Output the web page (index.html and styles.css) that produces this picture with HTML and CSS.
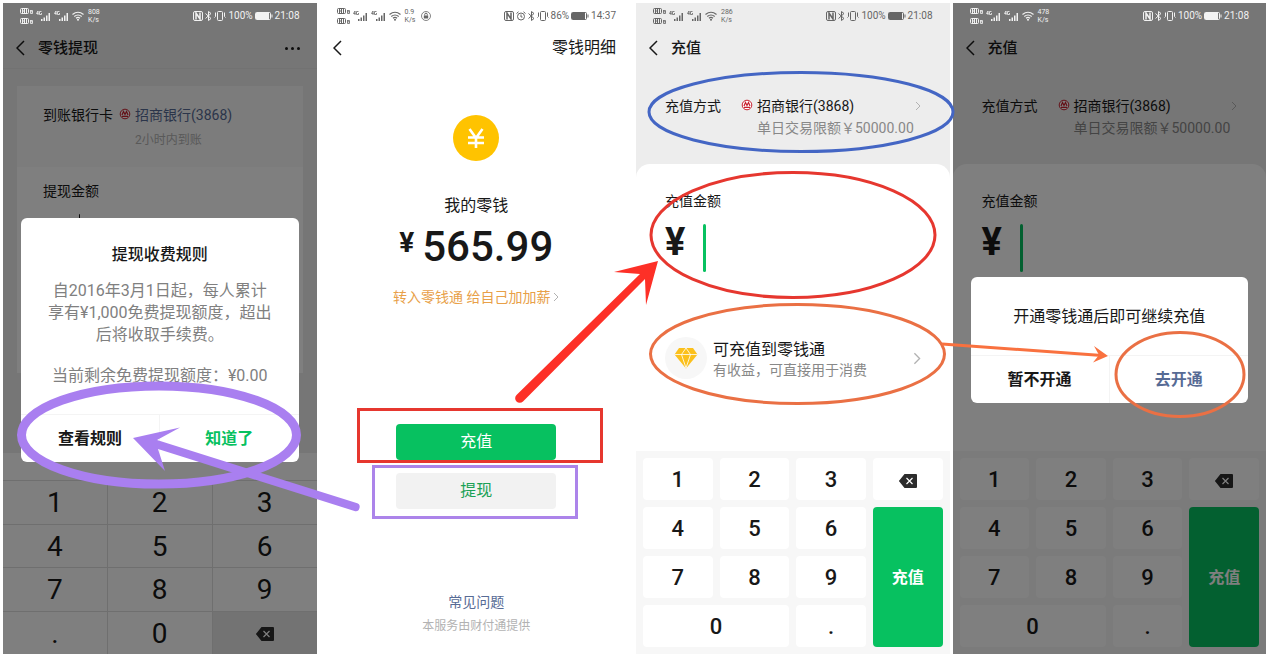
FILE: index.html
```html
<!DOCTYPE html>
<html lang="zh-CN">
<head>
  <meta charset="UTF-8" />
  <meta name="viewport" content="width=device-width, initial-scale=1.0"/>
  <title>零钱充值与提现</title>
  <link rel="stylesheet" href="styles.css">
</head>
<body>
  <!-- Shared icons -->
  <svg class="icon-defs" aria-hidden="true">
    <symbol id="hd" viewBox="0 0 14 17">
      <g fill="none" stroke="currentColor">
        <rect x="0.5" y="1.5" width="8" height="5" rx="1"/>
        <rect x="0.5" y="11.5" width="8" height="5" rx="1"/>
        <path d="M2.5 2v4M4.5 2v4M2.5 4h2M6.5 2v4M2.5 12v4M4.5 12v4M2.5 14h2M6.5 12v4"/>
        <path d="M10.5 3v3.500h2v-3h-2M10.500 4.800h2M10.500 13v3.500h2v-3h-2M10.500 14.800h2" stroke-width="0.8"/>
      </g>
    </symbol>
    <symbol id="signal" viewBox="0 0 16 12">
      <path d="M2 1L0.500 3.500h2M2 1v4M5.500 1.500h-2v3h2v-1.500" fill="none" stroke="currentColor" stroke-width="0.800"/>
      <path d="M5 9h1.500v2H5zM7.500 7.500H9V11H7.500zM10 5.500h1.500V11H10zM12.500 3H14v8h-1.500z" fill="currentColor"/>
    </symbol>
    <symbol id="wifi" viewBox="0 0 12 10">
      <g fill="none" stroke="currentColor" stroke-width="1.200">
        <path d="M0.500 3.500Q6-1 11.500 3.500M2.300 5.500Q6 2.500 9.700 5.500M4 7.300Q6 5.500 8 7.300"/>
      </g>
      <circle cx="6" cy="8.700" r="1" fill="currentColor"/>
    </symbol>
    <symbol id="nfc" viewBox="0 0 10 10">
      <rect x="0.500" y="0.500" width="9" height="9" rx="1.500" fill="none" stroke="currentColor"/>
      <path d="M3 8.500V2l4 6V1.500" fill="none" stroke="currentColor" stroke-width="1.500"/>
    </symbol>
    <symbol id="bluetooth" viewBox="0 0 7 10">
      <path d="M0.500 2.500l5.500 5L3.500 9.500v-9L6 2.500l-5.500 5" fill="none" stroke="currentColor"/>
    </symbol>
    <symbol id="vibrate" viewBox="0 0 12 10">
      <rect x="3.500" y="0.500" width="5" height="9" rx="1" fill="none" stroke="currentColor"/>
      <path d="M1.500 1.500v4l-1 1M10.500 1.500v4l1 1" fill="none" stroke="currentColor"/>
    </symbol>
    <symbol id="battery" viewBox="0 0 18 8">
      <rect x="0.500" y="0.500" width="15" height="7" rx="1" fill="none" stroke="currentColor"/>
      <path d="M1 1h13v6H1zM16.500 2.500h1v3h-1z" fill="currentColor"/>
    </symbol>
    <symbol id="alarm" viewBox="0 0 10 10">
      <circle cx="5" cy="5.500" r="3.500" fill="none" stroke="currentColor"/>
      <path d="M5 3.500v2.500h1.500M0.500 2.500L2.500 0.800M9.500 2.500L7.500 0.800" fill="none" stroke="currentColor"/>
    </symbol>
    <symbol id="lock" viewBox="0 0 10 10">
      <circle cx="5" cy="5" r="4.500" fill="none" stroke="currentColor" stroke-width="0.800"/>
      <path d="M2.800 4.500h4.400v3H2.800z" fill="currentColor"/>
      <path d="M3.700 4.500V3.500a1.300 1.300 0 0 1 2.600 0v1" fill="none" stroke="currentColor"/>
    </symbol>
    <symbol id="back" viewBox="0 0 9 16">
      <path d="M8 1L1 8l7 7" fill="none" stroke="currentColor" stroke-width="1.500"/>
    </symbol>
    <symbol id="next" viewBox="0 0 6 10">
      <path d="M1 1l4 4-4 4" fill="none" stroke="currentColor"/>
    </symbol>
    <symbol id="bank" viewBox="0 0 12 12">
      <circle cx="6" cy="6" r="4.800" fill="#fff" stroke="#c8202f"/>
      <path d="M3 7L4.500 3.500 6 6.500 7.500 3.500 9 7M3 8.300h6" fill="none" stroke="#c8202f" stroke-width="1.200"/>
    </symbol>
    <symbol id="delete" viewBox="0 0 18 14">
      <path d="M5.500 0H17a1 1 0 0 1 1 1v12a1 1 0 0 1-1 1H5.500L0.500 7.800a1 1 0 0 1 0-1.600z" fill="#2c2c2c"/>
      <path d="M7.500 4l6 6M13.500 4l-6 6" stroke="#fff" stroke-width="1.200"/>
    </symbol>
    <symbol id="diamond" viewBox="0 0 24 22">
      <path d="M5 1h14l4.500 6.500L12 21.500 0.500 7.500z" fill="#fbc01c"/>
      <path d="M0.500 7.500h23M7.500 7.500L12 21l4.500-13.500M7.500 7.500L12 1l4.500 6.500" fill="none" stroke="#fff" stroke-width="0.800"/>
    </symbol>
  </svg>

  <main class="board">
    <!-- Withdraw rules -->
    <section class="phone">
      <div class="status status-light">
        <svg class="i-hd"><use href="#hd"/></svg>
        <svg class="i-signal"><use href="#signal"/></svg>
        <svg class="i-signal"><use href="#signal"/></svg>
        <svg class="i-wifi"><use href="#wifi"/></svg>
        <span class="speed">808<br>K/s</span>
        <div class="status-right">
          <svg class="i-small"><use href="#nfc"/></svg>
          <svg class="i-bt"><use href="#bluetooth"/></svg>
          <svg class="i-vibrate"><use href="#vibrate"/></svg>
          <span>100%</span>
          <svg class="i-battery"><use href="#battery"/></svg>
          <time>21:08</time>
        </div>
      </div>
      <header class="nav nav-line">
        <button class="back" aria-label="返回"><svg><use href="#back"/></svg></button>
        <h2>零钱提现</h2>
        <button class="more" aria-label="更多"><i></i><i></i><i></i></button>
      </header>
      <div class="card">
        <div class="card-top">
          <div class="method">
            <span class="method-label">到账银行卡</span>
            <svg class="bank"><use href="#bank"/></svg>
            <div class="method-info">
              <a class="bank-link" href="#">招商银行(3868)</a>
              <p class="arrive">2小时内到账</p>
            </div>
          </div>
        </div>
        <div class="card-bottom">
          <label class="amount-label" for="withdraw">提现金额</label>
          <div class="amount-row">
            <span class="yen yen-small">¥</span>
            <span class="caret caret-dark"></span>
            <input id="withdraw" class="amount-input" type="text">
          </div>
        </div>
      </div>
      <div class="plain-pad">
        <div class="pad-bar"></div>
        <div class="plain-keys">
          <button>1</button><button>2</button><button>3</button>
          <button>4</button><button>5</button><button>6</button>
          <button>7</button><button>8</button><button>9</button>
          <button>.</button><button>0</button>
          <button class="plain-del" aria-label="删除"><svg class="i-del"><use href="#delete"/></svg></button>
        </div>
      </div>
      <div class="mask">
        <div class="dialog" role="dialog">
          <div class="rules">
            <h3>提现收费规则</h3>
            <p>自2016年3月1日起，每人累计<br>享有¥1,000免费提现额度，超出<br>后将收取手续费。</p>
            <p class="remain">当前剩余免费提现额度：¥0.00</p>
          </div>
          <div class="dialog-actions">
            <button>查看规则</button>
            <button class="green-text">知道了</button>
          </div>
        </div>
      </div>
    </section>

    <!-- Balance -->
    <section class="phone phone-white">
      <div class="status">
        <svg class="i-hd"><use href="#hd"/></svg>
        <svg class="i-signal"><use href="#signal"/></svg>
        <svg class="i-signal"><use href="#signal"/></svg>
        <svg class="i-wifi"><use href="#wifi"/></svg>
        <span class="speed">0.9<br>K/s</span>
        <svg class="i-small"><use href="#lock"/></svg>
        <div class="status-right">
          <svg class="i-small"><use href="#nfc"/></svg>
          <svg class="i-small"><use href="#alarm"/></svg>
          <svg class="i-bt"><use href="#bluetooth"/></svg>
          <svg class="i-vibrate"><use href="#vibrate"/></svg>
          <span>86%</span>
          <svg class="i-battery"><use href="#battery"/></svg>
          <time>14:37</time>
        </div>
      </div>
      <header class="nav">
        <button class="back" aria-label="返回"><svg><use href="#back"/></svg></button>
        <a class="nav-link" href="#">零钱明细</a>
      </header>
      <div class="wallet">
        <svg class="coin" viewBox="0 0 46 46" aria-hidden="true">
          <circle cx="23" cy="23" r="23" fill="#ffc300"/>
          <path d="M16.500 14l6.500 9 6.500-9M15 22.500h16M15 28h16M23 22v11" fill="none" stroke="#fff" stroke-width="2.600"/>
        </svg>
        <h3 class="wallet-title">我的零钱</h3>
        <p class="balance"><span class="balance-yen">¥</span>565.99</p>
        <a class="promo" href="#">转入零钱通 给自己加加薪<svg class="i-next"><use href="#next"/></svg></a>
        <div class="wallet-buttons">
          <button class="btn btn-green">充值</button>
          <button class="btn btn-grey">提现</button>
        </div>
        <a class="faq" href="#">常见问题</a>
        <p class="provider">本服务由财付通提供</p>
      </div>
    </section>

    <!-- Top up -->
    <section class="phone">
      <div class="status">
        <svg class="i-hd"><use href="#hd"/></svg>
        <svg class="i-signal"><use href="#signal"/></svg>
        <svg class="i-signal"><use href="#signal"/></svg>
        <svg class="i-wifi"><use href="#wifi"/></svg>
        <span class="speed">286<br>K/s</span>
        <div class="status-right">
          <svg class="i-small"><use href="#nfc"/></svg>
          <svg class="i-bt"><use href="#bluetooth"/></svg>
          <svg class="i-vibrate"><use href="#vibrate"/></svg>
          <span>100%</span>
          <svg class="i-battery"><use href="#battery"/></svg>
          <time>21:08</time>
        </div>
      </div>
      <header class="nav">
        <button class="back" aria-label="返回"><svg><use href="#back"/></svg></button>
        <h2>充值</h2>
      </header>
      <div class="method method-pay">
        <span class="method-label">充值方式</span>
        <svg class="bank"><use href="#bank"/></svg>
        <div class="method-info">
          <p class="bank-name">招商银行(3868)<svg class="i-next"><use href="#next"/></svg></p>
          <p class="limit">单日交易限额￥50000.00</p>
        </div>
      </div>
      <div class="sheet">
        <label class="amount-label" for="topup">充值金额</label>
        <div class="amount-row">
          <span class="yen">¥</span>
          <span class="caret"></span>
          <input id="topup" class="amount-input" type="text">
        </div>
        <a class="fund" href="#">
          <span class="fund-icon"><svg><use href="#diamond"/></svg></span>
          <span class="fund-text">
            <strong>可充值到零钱通</strong>
            <small>有收益，可直接用于消费</small>
          </span>
          <svg class="i-next-big"><use href="#next"/></svg>
        </a>
      </div>
      <div class="keypad">
        <button>1</button><button>2</button><button>3</button>
        <button aria-label="删除"><svg class="i-del"><use href="#delete"/></svg></button>
        <button>4</button><button>5</button><button>6</button>
        <button class="key-pay">充值</button>
        <button>7</button><button>8</button><button>9</button>
        <button class="key-zero">0</button><button>.</button>
      </div>
    </section>

    <!-- Top up, confirm dialog -->
    <section class="phone">
      <div class="status status-light">
        <svg class="i-hd"><use href="#hd"/></svg>
        <svg class="i-signal"><use href="#signal"/></svg>
        <svg class="i-signal"><use href="#signal"/></svg>
        <svg class="i-wifi"><use href="#wifi"/></svg>
        <span class="speed">478<br>K/s</span>
        <div class="status-right">
          <svg class="i-small"><use href="#nfc"/></svg>
          <svg class="i-bt"><use href="#bluetooth"/></svg>
          <svg class="i-vibrate"><use href="#vibrate"/></svg>
          <span>100%</span>
          <svg class="i-battery"><use href="#battery"/></svg>
          <time>21:08</time>
        </div>
      </div>
      <header class="nav">
        <button class="back" aria-label="返回"><svg><use href="#back"/></svg></button>
        <h2>充值</h2>
      </header>
      <div class="method method-pay">
        <span class="method-label">充值方式</span>
        <svg class="bank"><use href="#bank"/></svg>
        <div class="method-info">
          <p class="bank-name">招商银行(3868)<svg class="i-next"><use href="#next"/></svg></p>
          <p class="limit">单日交易限额￥50000.00</p>
        </div>
      </div>
      <div class="sheet">
        <label class="amount-label" for="topup2">充值金额</label>
        <div class="amount-row">
          <span class="yen">¥</span>
          <span class="caret"></span>
          <input id="topup2" class="amount-input" type="text">
        </div>
      </div>
      <div class="keypad">
        <button>1</button><button>2</button><button>3</button>
        <button aria-label="删除"><svg class="i-del"><use href="#delete"/></svg></button>
        <button>4</button><button>5</button><button>6</button>
        <button class="key-pay">充值</button>
        <button>7</button><button>8</button><button>9</button>
        <button class="key-zero">0</button><button>.</button>
      </div>
      <div class="mask">
        <div class="dialog" role="dialog">
          <p class="confirm">开通零钱通后即可继续充值</p>
          <div class="dialog-actions">
            <button>暂不开通</button>
            <button class="blue-text">去开通</button>
          </div>
        </div>
      </div>
    </section>

    <!-- Hand-drawn marks over the four screens -->
    <svg class="marks" viewBox="0 0 1269 657" preserveAspectRatio="none" aria-hidden="true">
      <g fill="none" stroke-width="3">
        <ellipse cx="159" cy="435" rx="137.500" ry="49" stroke="#a97ff0" stroke-width="9"/>
        <rect x="358.500" y="409.500" width="243" height="52" stroke="#e6372f"/>
        <rect x="373.500" y="466.500" width="203" height="51" stroke="#ac84ea"/>
        <ellipse cx="801" cy="112" rx="152" ry="39.500" stroke="#4466c4"/>
        <ellipse cx="793" cy="235" rx="142" ry="62.500" stroke="#e6372f"/>
        <ellipse cx="797.500" cy="354" rx="147" ry="49.500" stroke="#ea7044"/>
        <ellipse cx="1180" cy="374.500" rx="64" ry="42" stroke="#ea7044"/>
        <path d="M942 344L1102 355.500" stroke="#f9713f"/>
      </g>
      <path d="M133 438L180 427.500 157 440 356.500 503a4 4 0 0 1-2 8L158 449 165 471z" fill="#a97ff0"/>
      <path d="M658 261L646 305 645 279 523 401.500a4.500 4.500 0 0 1-6.500-6.500L640 274 614 272z" fill="#fd3027"/>
      <path d="M1108 356L1094 346 1099 355 1093 362.500z" fill="#f9713f"/>
    </svg>
  </main>
</body>
</html>
```

FILE: styles.css
```css
* {
  box-sizing: border-box;
}

body {
  margin: 0;
  background-color: white;
  color: #181818;
  font-family: Roboto, "Noto Sans CJK SC", sans-serif;
  font-size: 14px;
  line-height: 22px;
}

h2,
h3,
p {
  margin: 0;
}

a {
  text-decoration: none;
}

button {
  margin: 0;
  padding: 0;
  border: 0;
  background: none;
  color: inherit;
  font: inherit;
}

.icon-defs {
  display: none;
}

.board {
  position: relative;
  display: grid;
  grid-template-columns: repeat(4, 1fr);
  gap: 3px;
  min-height: 100vh;
  padding: 3px;
}

.phone {
  position: relative;
  display: flex;
  flex-direction: column;
  min-width: 0;
  background-color: #ededed;
}

.phone-white {
  background-color: white;
}

/* Status bar */
.status {
  display: flex;
  align-items: center;
  gap: 2px;
  height: 25px;
  padding: 0 17px;
  color: #666;
  font-size: 10px;
  line-height: 12px;
}

.status-light {
  position: relative;
  z-index: 2;
  color: #f2f2f2;
}

.status-right {
  display: flex;
  align-items: center;
  gap: 2px;
  margin-left: auto;
}

.speed {
  margin: 0 4px 0 2px;
  font-size: 7px;
  line-height: 8px;
}

.i-hd {
  width: 14px;
  height: 17px;
}

.i-signal {
  width: 16px;
  height: 12px;
}

.i-wifi {
  width: 12px;
  height: 10px;
}

.i-small {
  width: 10px;
  height: 10px;
}

.i-bt {
  width: 7px;
  height: 10px;
}

.i-vibrate {
  width: 12px;
  height: 10px;
}

.i-battery {
  width: 18px;
  height: 8px;
}

/* Title bar */
.nav {
  display: flex;
  align-items: center;
  height: 40px;
  padding: 0 17px 0 13px;
}

.nav-line {
  box-shadow: 0 1px 0 #e4e4e4;
}

.nav h2 {
  font-size: 15px;
  font-weight: 500;
}

.back {
  width: 22px;
  height: 16px;
  text-align: left;
}

.back svg {
  display: block;
  width: 9px;
  height: 16px;
}

.more {
  display: flex;
  gap: 3px;
  margin-left: auto;
}

.more i {
  width: 3px;
  height: 3px;
  border-radius: 50%;
  background-color: #181818;
}

.nav-link {
  margin-left: auto;
  color: #181818;
  font-size: 16px;
}

/* Bank card row */
.method {
  display: flex;
}

.method-pay {
  padding: 27px 29px 25px;
}

.method-label {
  flex: 0 0 76px;
}

.bank {
  flex: none;
  width: 12px;
  height: 12px;
  margin: 4px 4px 0 0;
}

.method-info {
  flex: 1;
}

.bank-name {
  display: flex;
  align-items: center;
  justify-content: space-between;
}

.bank-link {
  color: #576b95;
}

.arrive {
  margin-top: 3px;
  color: #b2b2b2;
  font-size: 12px;
}

.limit {
  color: #888;
  white-space: nowrap;
}

.i-next {
  width: 6px;
  height: 10px;
  color: #b2b2b2;
}

/* Withdraw card */
.card {
  display: flex;
  flex: 1;
  flex-direction: column;
  margin: 18px 14px 80px;
}

.card-top {
  padding: 18px 26px 16px;
  background-color: #f9f9f9;
}

.card-bottom {
  flex: 1;
  padding: 13px 26px;
  background-color: white;
}

.amount-label {
  display: block;
}

.amount-row {
  display: flex;
  margin-top: 12px;
}

.yen {
  width: 38px;
  font-size: 38px;
  font-weight: 700;
  line-height: 36px;
}

.yen-small {
  width: 36px;
  font-size: 30px;
}

.caret {
  width: 3px;
  height: 48px;
  border-radius: 2px;
  background-color: #07c160;
}

.caret-dark {
  width: 1px;
  background-color: #181818;
}

.amount-input {
  flex: 1;
  min-width: 0;
  border: 0;
  outline: 0;
  background: none;
  font: inherit;
}

/* Top up sheet */
.sheet {
  flex: 1;
  padding: 26px 29px 0;
  border-radius: 14px 14px 0 0;
  background-color: white;
}

.fund {
  display: flex;
  align-items: center;
  margin-top: 64px;
  color: #181818;
}

.fund-icon {
  display: flex;
  align-items: center;
  justify-content: center;
  width: 42px;
  height: 42px;
  margin-right: 6px;
  border-radius: 50%;
  background-color: #f7f7f7;
}

.fund-icon svg {
  width: 24px;
  height: 22px;
}

.fund-text {
  display: flex;
  flex: 1;
  flex-direction: column;
  padding-top: 4px;
}

.fund-text strong {
  font-size: 16px;
  font-weight: 400;
  line-height: 20px;
}

.fund-text small {
  color: #888;
  font-size: 14px;
  line-height: 20px;
}

.i-next-big {
  width: 8px;
  height: 13px;
  color: #b2b2b2;
}

/* Keypads */
.keypad {
  display: grid;
  grid-template-columns: repeat(4, 1fr);
  grid-auto-rows: 42px;
  gap: 7px;
  padding: 7px;
  background-color: #f7f7f7;
}

.keypad button {
  padding-top: 2px;
  border-radius: 4px;
  background-color: white;
  font-size: 22px;
  font-weight: 500;
}

.keypad .key-pay {
  grid-row: 2 / 5;
  grid-column: 4;
  background-color: #07c160;
  color: white;
  font-size: 16px;
  font-weight: 700;
}

.key-zero {
  grid-column: span 2;
}

.i-del {
  width: 18px;
  height: 14px;
  vertical-align: middle;
}

.plain-pad {
  background-color: white;
}

.pad-bar {
  height: 27px;
}

.plain-keys {
  display: grid;
  grid-template-columns: repeat(3, 1fr);
  grid-auto-rows: 1fr;
  gap: 1px;
  height: 174px;
  padding-top: 1px;
  background-color: #dedede;
}

.plain-keys button {
  padding-top: 2px;
  background-color: white;
  font-size: 28px;
}

.plain-keys .plain-del {
  padding-top: 0;
  background-color: #e6e6e6;
}

/* Dialogs */
.mask {
  position: absolute;
  inset: 0;
  display: flex;
  align-items: center;
  padding: 22px 18px 0;
  background-color: rgba(0, 0, 0, 0.5);
}

.dialog {
  flex: 1;
  overflow: hidden;
  border-radius: 6px;
  background-color: white;
  text-align: center;
}

.rules {
  padding: 25px 0 27px;
  color: #808080;
  font-size: 16px;
}

.rules h3 {
  margin-bottom: 13px;
  color: #181818;
  font-size: 16px;
  font-weight: 500;
  line-height: 24px;
}

.remain {
  margin-top: 19px;
}

.confirm {
  padding: 29px 0 27px;
  font-size: 16px;
}

.dialog-actions {
  display: flex;
  height: 48px;
  border-top: 1px solid #f4f4f4;
}

.dialog-actions button {
  flex: 1;
  padding-top: 2px;
  font-size: 16px;
  font-weight: 700;
}

.dialog-actions button + button {
  border-left: 1px solid #f4f4f4;
}

.dialog-actions .green-text {
  color: #07c160;
}

.dialog-actions .blue-text {
  color: #576b95;
}

/* Wallet */
.wallet {
  display: flex;
  flex: 1;
  flex-direction: column;
  align-items: center;
  padding: 47px 0 19px;
}

.coin {
  width: 46px;
  height: 46px;
}

.wallet-title {
  margin-top: 33px;
  font-size: 16px;
  font-weight: 400;
  line-height: 24px;
}

.balance {
  display: flex;
  gap: 8px;
  margin-top: 7px;
  font-size: 42px;
  font-weight: 500;
  line-height: 44px;
}

.balance-yen {
  font-size: 28px;
  font-weight: 700;
  line-height: 36px;
}

.promo {
  display: flex;
  align-items: center;
  gap: 3px;
  margin-top: 17px;
  color: #e8a048;
}

.wallet-buttons {
  display: flex;
  flex-direction: column;
  gap: 13px;
  width: 160px;
  margin-top: auto;
}

.btn {
  height: 36px;
  border-radius: 4px;
  font-size: 16px;
}

.btn-green {
  background-color: #07c160;
  color: white;
}

.btn-grey {
  background-color: #f2f2f2;
  color: #1aa156;
}

.faq {
  margin-top: 82px;
  color: #576b95;
}

.provider {
  margin-top: 4px;
  color: #b2b2b2;
  font-size: 12px;
  line-height: 18px;
}

.marks {
  position: absolute;
  inset: 0;
  z-index: 3;
  width: 100%;
  height: 100%;
  pointer-events: none;
}
```
